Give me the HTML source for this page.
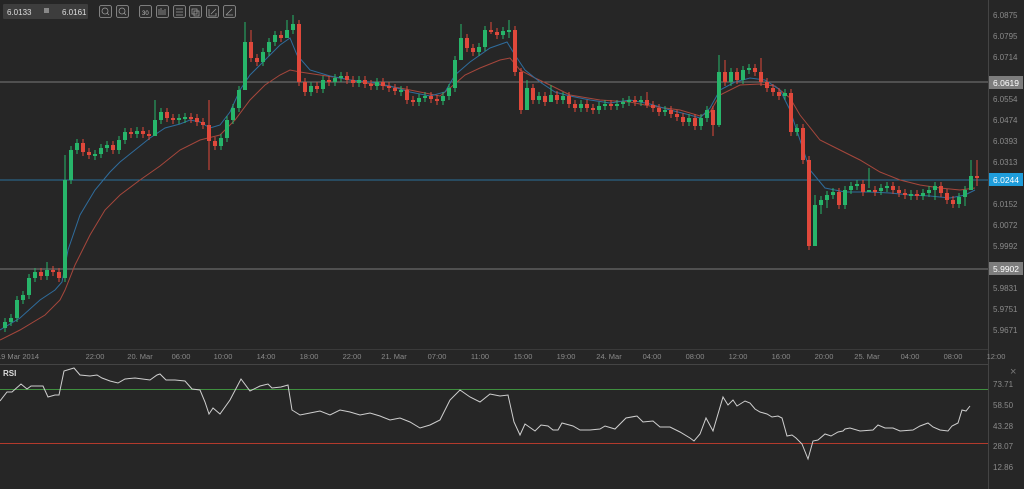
<!DOCTYPE html>
<html><head><meta charset="utf-8">
<style>
html,body{margin:0;padding:0;background:#262626;}
body{width:1024px;height:489px;overflow:hidden;position:relative;font-family:"Liberation Sans",sans-serif;}
svg{position:absolute;left:0;top:0;}
</style></head>
<body>
<svg width="1024" height="489" xmlns="http://www.w3.org/2000/svg">
<rect width="1024" height="489" fill="#262626"/>
<line x1="988.5" y1="0" x2="988.5" y2="489" stroke="#444"/>
<line x1="0" y1="349.5" x2="988" y2="349.5" stroke="#3a3a3a"/>
<line x1="0" y1="364.5" x2="988" y2="364.5" stroke="#444"/>
<line x1="0" y1="82" x2="988" y2="82" stroke="#7a7a7a"/>
<line x1="0" y1="269" x2="988" y2="269" stroke="#7a7a7a"/>
<line x1="0" y1="180" x2="988" y2="180" stroke="#2a7099"/>
<line x1="0" y1="389.5" x2="988" y2="389.5" stroke="#3f8f3f"/>
<line x1="0" y1="443.5" x2="988" y2="443.5" stroke="#b33a2c"/>

<polyline fill="none" stroke="#a6473c" stroke-width="1" points="0,340 20,330 45,315 60,300 65,290 75,265 90,235 105,210 120,195 140,180 160,166 180,150 200,140 220,135 235,120 250,100 265,85 280,75 290,70 300,72 320,75 340,78 360,82 380,85 400,88 420,92 440,96 450,88 465,75 480,68 500,60 510,58 520,70 535,78 550,85 570,95 600,100 630,102 650,106 680,110 700,116 710,112 720,95 740,85 760,84 775,86 790,98 800,115 808,125 820,140 840,150 860,160 880,172 900,180 920,185 940,188 960,190 975,188"/>
<polyline fill="none" stroke="#2f6c9c" stroke-width="1" points="0,330 20,318 40,300 55,290 62,282 68,250 80,215 95,190 110,172 120,162 135,150 150,138 165,128 180,124 190,120 200,122 210,128 220,125 230,112 240,90 250,75 260,65 270,55 280,45 290,38 297,55 310,70 330,76 350,80 370,82 390,86 410,92 430,96 445,92 455,75 470,62 490,48 507,42 515,55 525,70 540,82 555,92 570,96 590,100 610,103 630,100 650,104 670,110 690,115 700,118 710,108 720,90 735,82 750,78 765,80 780,90 790,110 800,140 810,170 825,188 845,192 870,192 890,193 910,195 930,196 950,198 965,195 975,190"/>

<!-- green wicks -->
<path stroke="#27b56a" stroke-width="1" fill="none" d="M5 318v14M11 314v12M17 296v26M23 291v13M29 274v25M35 268v14M47 262v18M65 155v127M71 146v38M77 139v15M95 150v10M101 144v14M107 141v11M119 136v18M125 128v16M137 127v11M155 100v28M161 108v16M179 114v10M185 113v10M221 134v16M227 116v26M233 104v20M239 86v26M245 22v56M263 48v18M269 38v18M275 31v15M287 20v16M293 15v19M311 82v14M323 76v17M335 74v12M341 72v10M359 76v11M377 78v12M401 86v10M419 94v12M425 92v10M443 92v13M449 84v16M455 56v36M461 24v30M479 43v13M485 26v25M503 27v12M509 20v18M527 80v30M539 92v12M551 85v17M563 92v12M581 100v12M599 102v12M605 100v10M617 100v10M623 98v10M629 96v10M641 96v10M665 106v10M689 114v12M701 114v16M707 106v16M719 55v72M731 68v18M743 66v18M749 64v10M785 89v11M797 124v12M815 195v50M821 196v18M827 191v17M833 188v11M845 186v23M851 182v12M857 180v10M869 168v20M881 184v11M887 182v10M911 190v10M923 189v11M929 186v11M935 182v18M959 193v15M965 186v20M971 160v28"/>
<!-- red wicks -->
<path stroke="#e0483b" stroke-width="1" fill="none" d="M41 268v12M53 266v10M59 268v14M83 139v17M89 148v11M113 141v13M131 128v10M143 127v11M149 130v10M167 108v14M173 114v10M191 113v10M197 114v12M203 118v11M209 100v70M215 137v13M251 30v32M257 54v12M281 31v11M299 20v66M305 78v18M317 82v11M329 76v10M347 72v12M353 76v11M365 76v12M371 80v10M383 78v12M389 82v10M395 84v11M407 86v18M413 96v10M431 92v11M437 95v10M467 34v18M473 44v12M491 22v12M497 28v11M515 26v50M521 68v46M533 84v20M545 92v14M557 91v13M569 92v16M575 100v12M587 100v12M593 104v10M611 100v10M635 96v10M647 92v16M653 101v11M659 104v12M671 106v12M677 110v11M683 113v13M695 114v16M713 106v30M725 60v26M737 68v16M755 64v12M761 58v28M767 78v14M773 84v12M779 88v12M791 89v47M803 124v40M809 156v94M839 188v21M863 180v16M875 186v10M893 182v12M899 186v11M905 189v10M917 190v10M941 182v15M947 189v15M953 196v12M977 160v26"/>
<!-- green bodies -->
<path fill="#27b56a" d="M3 322h4v6h-4zM9 318h4v4h-4zM15 300h4v18h-4zM21 295h4v5h-4zM27 278h4v17h-4zM33 272h4v6h-4zM45 270h4v6h-4zM63 180h4v98h-4zM69 150h4v30h-4zM75 143h4v7h-4zM93 154h4v2h-4zM99 148h4v6h-4zM105 145h4v3h-4zM117 140h4v10h-4zM123 132h4v8h-4zM135 131h4v3h-4zM153 120h4v16h-4zM159 112h4v8h-4zM177 118h4v2h-4zM183 117h4v2h-4zM219 138h4v8h-4zM225 120h4v18h-4zM231 108h4v12h-4zM237 90h4v18h-4zM243 42h4v48h-4zM261 52h4v10h-4zM267 42h4v10h-4zM273 35h4v7h-4zM285 30h4v8h-4zM291 24h4v6h-4zM309 86h4v6h-4zM321 80h4v9h-4zM333 78h4v4h-4zM339 76h4v2h-4zM357 80h4v3h-4zM375 82h4v4h-4zM399 90h4v2h-4zM417 98h4v4h-4zM423 96h4v2h-4zM441 96h4v5h-4zM447 88h4v8h-4zM453 60h4v28h-4zM459 38h4v22h-4zM477 47h4v5h-4zM483 30h4v17h-4zM501 31h4v4h-4zM507 30h4v2h-4zM525 88h4v22h-4zM537 96h4v4h-4zM549 95h4v7h-4zM561 96h4v4h-4zM579 104h4v4h-4zM597 106h4v4h-4zM603 104h4v2h-4zM615 104h4v2h-4zM621 102h4v2h-4zM627 100h4v2h-4zM639 100h4v2h-4zM663 110h4v2h-4zM687 118h4v4h-4zM699 118h4v8h-4zM705 110h4v8h-4zM717 72h4v53h-4zM729 72h4v10h-4zM741 70h4v10h-4zM747 68h4v2h-4zM783 93h4v3h-4zM795 128h4v4h-4zM813 205h4v41h-4zM819 200h4v5h-4zM825 195h4v5h-4zM831 192h4v3h-4zM843 190h4v15h-4zM849 186h4v4h-4zM855 184h4v2h-4zM867 190h4v2h-4zM879 188h4v3h-4zM885 186h4v2h-4zM909 194h4v2h-4zM921 193h4v3h-4zM927 190h4v3h-4zM933 186h4v4h-4zM957 197h4v7h-4zM963 190h4v7h-4zM969 176h4v14h-4z"/>
<!-- red bodies -->
<path fill="#e0483b" d="M39 272h4v4h-4zM51 270h4v2h-4zM57 272h4v6h-4zM81 143h4v9h-4zM87 152h4v3h-4zM111 145h4v5h-4zM129 132h4v2h-4zM141 131h4v3h-4zM147 134h4v2h-4zM165 112h4v6h-4zM171 118h4v2h-4zM189 117h4v2h-4zM195 118h4v4h-4zM201 122h4v3h-4zM207 125h4v16h-4zM213 141h4v5h-4zM249 42h4v16h-4zM255 58h4v4h-4zM279 35h4v3h-4zM297 24h4v58h-4zM303 82h4v10h-4zM315 86h4v3h-4zM327 80h4v2h-4zM345 76h4v4h-4zM351 80h4v3h-4zM363 80h4v4h-4zM369 84h4v2h-4zM381 82h4v4h-4zM387 86h4v2h-4zM393 88h4v3h-4zM405 90h4v10h-4zM411 100h4v2h-4zM429 96h4v3h-4zM435 99h4v2h-4zM465 38h4v10h-4zM471 48h4v4h-4zM489 30h4v2h-4zM495 32h4v3h-4zM513 30h4v42h-4zM519 72h4v38h-4zM531 88h4v12h-4zM543 96h4v6h-4zM555 95h4v5h-4zM567 96h4v8h-4zM573 104h4v4h-4zM585 104h4v4h-4zM591 108h4v2h-4zM609 104h4v2h-4zM633 100h4v2h-4zM645 100h4v5h-4zM651 105h4v3h-4zM657 108h4v4h-4zM669 110h4v4h-4zM675 114h4v3h-4zM681 117h4v5h-4zM693 118h4v8h-4zM711 110h4v15h-4zM723 72h4v10h-4zM735 72h4v8h-4zM753 68h4v4h-4zM759 72h4v10h-4zM765 82h4v6h-4zM771 88h4v4h-4zM777 92h4v4h-4zM789 93h4v39h-4zM801 128h4v32h-4zM807 160h4v86h-4zM837 192h4v13h-4zM861 184h4v8h-4zM873 190h4v2h-4zM891 186h4v4h-4zM897 190h4v3h-4zM903 193h4v2h-4zM915 194h4v2h-4zM939 186h4v7h-4zM945 193h4v7h-4zM951 200h4v4h-4zM975 176h4v2h-4z"/>

<polyline fill="none" stroke="#cfcfcf" stroke-width="1" points="0,401 7,392 12,392 21,384 27,389 31,386 43,386 48,397 55,395 59,395 64,371 74,368 80,375 90,376 97,375 102,378 110,381 118,383 125,379 135,378 150,380 157,375 160,374 166,380 175,380 185,381 192,389 200,390 205,402 209,414 213,408 220,414 230,400 241,379 250,391 260,386 268,384 272,388 281,387 288,385 292,410 300,415 310,413 320,411 330,415 340,410 350,412 360,415 370,413 380,416 390,420 400,418 410,422 420,428 430,425 440,420 450,400 460,390 470,397 480,402 490,394 500,396 508,395 514,422 520,435 525,424 535,431 541,425 548,426 553,430 558,430 562,423 573,426 580,430 590,430 600,429 605,426 615,429 626,418 637,416 643,422 653,421 660,427 670,427 680,432 690,438 694,441 700,434 706,418 713,431 723,397 728,405 733,400 737,406 745,401 750,403 755,409 760,412 767,414 772,417 778,416 782,418 787,436 792,435 796,438 802,444 808,459 813,441 818,440 825,434 831,436 838,432 843,431 845,429 850,428 860,431 873,430 878,425 885,428 893,428 900,431 913,430 920,426 928,423 933,427 940,430 948,431 952,426 958,423 962,410 966,411 970,406"/>

<g font-size="8" fill="#8a8a8a">
<text x="993" y="18">6.0875</text>
<text x="993" y="39">6.0795</text>
<text x="993" y="60">6.0714</text>
<text x="993" y="102">6.0554</text>
<text x="993" y="123">6.0474</text>
<text x="993" y="144">6.0393</text>
<text x="993" y="165">6.0313</text>
<text x="993" y="207">6.0152</text>
<text x="993" y="228">6.0072</text>
<text x="993" y="249">5.9992</text>
<text x="993" y="291">5.9831</text>
<text x="993" y="312">5.9751</text>
<text x="993" y="333">5.9671</text>
<text x="993" y="387">73.71</text>
<text x="993" y="408">58.50</text>
<text x="993" y="429">43.28</text>
<text x="993" y="449">28.07</text>
<text x="993" y="470">12.86</text>
</g>
<rect x="989" y="76" width="34" height="13" fill="#7d7d7d"/>
<text x="993" y="86" font-size="8.5" fill="#fff">6.0619</text>
<rect x="989" y="173" width="34" height="13" fill="#1f9ddb"/>
<text x="993" y="183" font-size="8.5" fill="#fff">6.0244</text>
<rect x="989" y="262" width="34" height="13" fill="#7d7d7d"/>
<text x="993" y="272" font-size="8.5" fill="#fff">5.9902</text>
<text x="1010" y="375" font-size="11" fill="#777">×</text>
<g font-size="7.5" fill="#8a8a8a" text-anchor="middle">
<text x="18" y="359">19 Mar 2014</text>
<text x="95" y="359">22:00</text>
<text x="140" y="359">20. Mar</text>
<text x="181" y="359">06:00</text>
<text x="223" y="359">10:00</text>
<text x="266" y="359">14:00</text>
<text x="309" y="359">18:00</text>
<text x="352" y="359">22:00</text>
<text x="394" y="359">21. Mar</text>
<text x="437" y="359">07:00</text>
<text x="480" y="359">11:00</text>
<text x="523" y="359">15:00</text>
<text x="566" y="359">19:00</text>
<text x="609" y="359">24. Mar</text>
<text x="652" y="359">04:00</text>
<text x="695" y="359">08:00</text>
<text x="738" y="359">12:00</text>
<text x="781" y="359">16:00</text>
<text x="824" y="359">20:00</text>
<text x="867" y="359">25. Mar</text>
<text x="910" y="359">04:00</text>
<text x="953" y="359">08:00</text>
<text x="996" y="359">12:00</text>
</g>
<text x="3" y="376" font-size="8" fill="#ddd" font-weight="bold">RSI</text>
<rect x="3" y="4" width="85" height="15" rx="1" fill="#3d3d3d"/>
<text x="7" y="15" font-size="8" fill="#ddd">6.0133</text>
<rect x="44" y="8" width="5" height="5" fill="#888"/>
<text x="62" y="15" font-size="8" fill="#ddd">6.0161</text>
<g fill="none" stroke="#999" stroke-width="0.8">
<rect x="99.5" y="5.5" width="12" height="12" rx="2" fill="#2c2c2c"/>
<rect x="116.5" y="5.5" width="12" height="12" rx="2" fill="#2c2c2c"/>
<rect x="139.5" y="5.5" width="12" height="12" rx="2" fill="#2c2c2c"/>
<rect x="156.5" y="5.5" width="12" height="12" rx="2" fill="#2c2c2c"/>
<rect x="173.5" y="5.5" width="12" height="12" rx="2" fill="#2c2c2c"/>
<rect x="189.5" y="5.5" width="12" height="12" rx="2" fill="#2c2c2c"/>
<rect x="206.5" y="5.5" width="12" height="12" rx="2" fill="#2c2c2c"/>
<rect x="223.5" y="5.5" width="12" height="12" rx="2" fill="#2c2c2c"/>
<circle cx="105" cy="11" r="3"/><line x1="107" y1="13" x2="109" y2="15"/>
<circle cx="122" cy="11" r="3"/><line x1="124" y1="13" x2="126" y2="15"/>
<path d="M159 15V9M161 15V8M163 15V10M165 15V9"/>
<path d="M176 9h7M176 12h7M176 15h7"/>
<rect x="192" y="9" width="5" height="5"/><rect x="194" y="11" width="5" height="5"/>
<path d="M209 9v7h7v-3M211 14l5-5"/>
<path d="M226 15l6-6M226 15h7"/>
</g>
<text x="142" y="15" font-size="6" fill="#bbb">30</text>
</svg>
</body></html>
